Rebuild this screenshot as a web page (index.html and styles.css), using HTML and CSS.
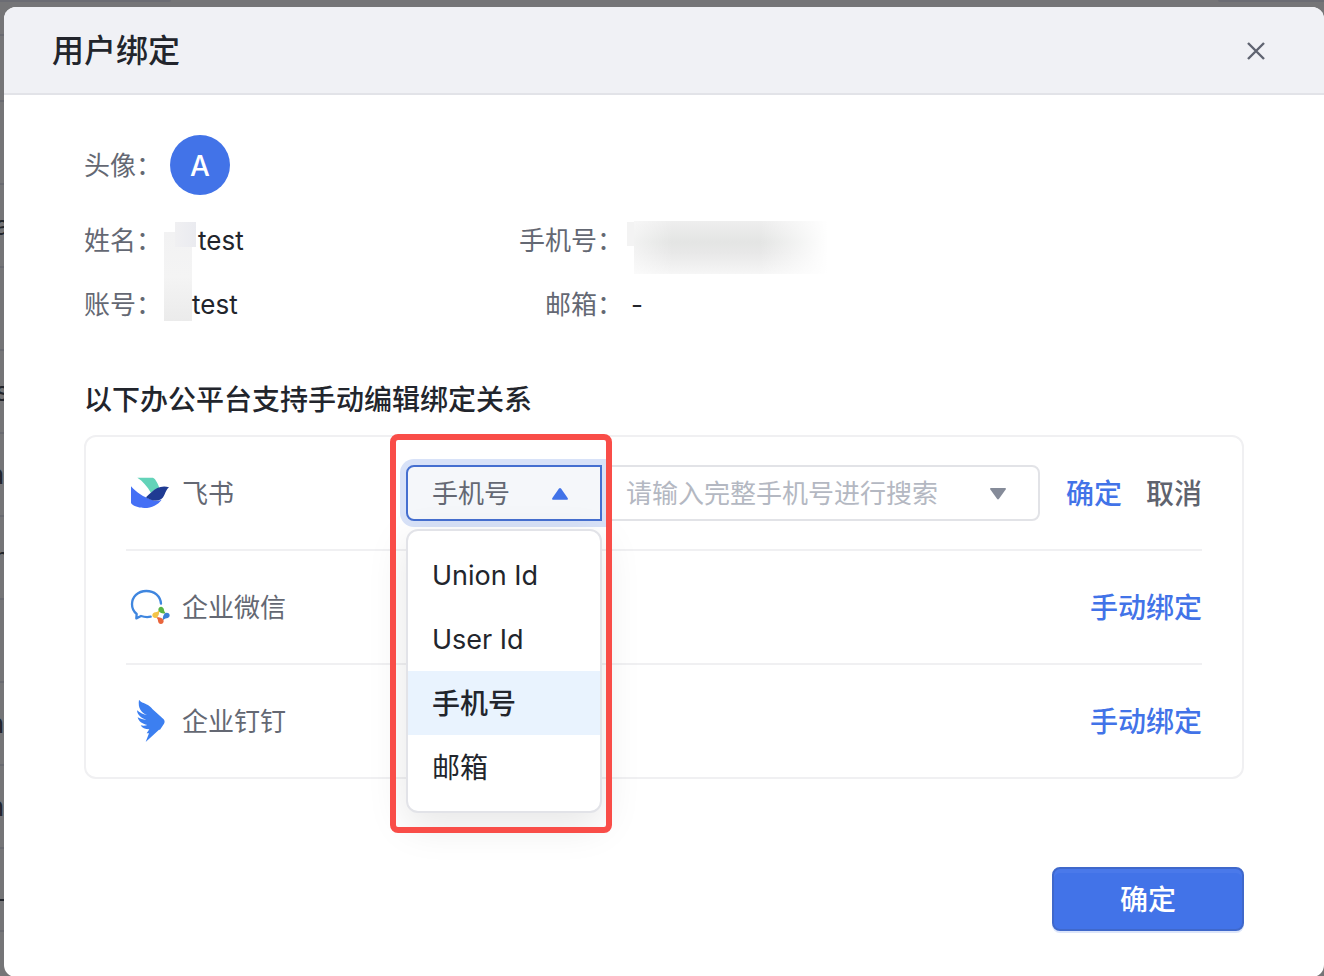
FILE: index.html
```html
<!DOCTYPE html>
<html lang="zh-CN">
<head>
    <meta charset="UTF-8">
    <meta name="viewport" content="width=device-width, initial-scale=1.0">
    <title>用户绑定</title>
    <link rel="stylesheet" href="styles.css">
</head>
<body>
    <div class="tabs">
        <span class="tab tab-left"></span>
        <span class="tab tab-right"></span>
    </div>
    <div class="layout">
        <div class="page-rows" aria-hidden="true">
            <div class="page-row first"></div>
            <div class="page-row head"></div>
            <div class="page-row"></div>
            <div class="page-row">a</div>
            <div class="page-row"></div>
            <div class="page-row">s</div>
            <div class="page-row end">a</div>
            <div class="page-row">n</div>
            <div class="page-row"></div>
            <div class="page-row end">n</div>
            <div class="page-row end">n</div>
            <div class="page-row">_</div>
        </div>

        <div class="modal" role="dialog" aria-labelledby="modalTitle">
            <div class="modal-header">
                <h2 id="modalTitle">用户绑定</h2>
                <button class="close" type="button" aria-label="关闭">
                    <svg width="18" height="18" viewBox="0 0 18 18"><path d="M1 1l16 16M17 1L1 17" stroke="#5f6470" stroke-width="2.4" fill="none"/></svg>
                </button>
            </div>

            <div class="modal-body">
                <div class="field avatar-field">
                    <span class="label">头像：</span>
                    <span class="avatar">A</span>
                </div>
                <div class="info">
                    <div class="field">
                        <span class="label">姓名：</span>
                        <span class="value masked-name">test<span class="mask mask-tall"></span><span class="mask mask-top"></span></span>
                    </div>
                    <div class="field right">
                        <span class="label">手机号：</span>
                        <span class="value"><span class="mask mask-edge"></span><span class="mask mask-phone"></span></span>
                    </div>
                    <div class="field">
                        <span class="label">账号：</span>
                        <span class="value masked-account">test</span>
                    </div>
                    <div class="field right">
                        <span class="label">邮箱：</span>
                        <span class="value">-</span>
                    </div>
                </div>

                <h3>以下办公平台支持手动编辑绑定关系</h3>
                <div class="platforms">
                    <div class="platform">
                        <div class="platform-name">
                            <svg class="logo" width="40" height="36" viewBox="60 46 120 108">
                                <path d="M82 54h44c4 0 7 2 9 5 5 8 10 16 13 26-10 2-18 7-25 15C112 80 98 64 82 54z" fill="#63d3b9"/>
                                <path d="M63 80c16 18 38 33 62 40 9 3 19 4 30 0-11 15-29 25-52 25-16 0-30-5-37-11-2-2-3-3-3-6z" fill="#4570f5"/>
                                <path d="M108 113c6-6 11-11 17-16 13-13 32-20 52-14-7 6-10 14-14 23-6 14-19 20-38 15-6-2-12-4-17-8z" fill="#1f3b92"/>
                            </svg>
                            <span>飞书</span>
                        </div>
                        <div class="editor">
                            <div class="type-select">
                                <select id="bindType" aria-label="绑定方式">
                                    <option>Union Id</option>
                                    <option>User Id</option>
                                    <option selected>手机号</option>
                                    <option>邮箱</option>
                                </select>
                                <svg class="caret" width="16" height="12" viewBox="0 0 16 12"><path d="M0 10.500L7 .6q1-1.200 2 0l7 9.900q0 1.200-1 1.200H1q-1 0-1-1.200z" fill="#4273e8"/></svg>
                                <ul class="menu">
                                    <li><button type="button" class="latin">Union Id</button></li>
                                    <li><button type="button" class="latin">User Id</button></li>
                                    <li><button type="button" class="selected">手机号</button></li>
                                    <li><button type="button">邮箱</button></li>
                                </ul>
                                <span class="highlight"></span>
                            </div>
                            <div class="search">
                                <input type="text" id="keyword" aria-label="搜索" placeholder="请输入完整手机号进行搜索">
                                <svg class="caret" width="16" height="12" viewBox="0 0 16 12"><path d="M0 1q0-1 1-1h14q1 0 1 1L9 10.800q-1 1.200-2 0z" fill="#858b99"/></svg>
                            </div>
                        </div>
                        <div class="actions">
                            <button type="button" class="link">确定</button>
                            <button type="button" class="link cancel">取消</button>
                        </div>
                    </div>
                    <div class="platform">
                        <div class="platform-name">
                            <svg class="logo" width="40" height="36" viewBox="60 42 120 108">
                                <path d="M153 86C151 63 133 48 109 48 83 48 66 66 66 88c0 12 5 22 14 29l-1 13 14-7c9 3 20 4 29 2" fill="none" stroke="#3f86df" stroke-width="7" stroke-linejoin="round" stroke-linecap="round"/>
                                <path d="M145 104c0-6 4-9 8-9 5 0 8 4 9 9 0 5 3 8 6 11-9 2-23-2-23-11z" fill="#5bb544"/>
                                <path d="M145 104c0-6 4-9 8-9 5 0 8 4 9 9 0 5 3 8 6 11-9 2-23-2-23-11z" fill="#3a80d8" transform="rotate(90 153 121)"/>
                                <path d="M145 104c0-6 4-9 8-9 5 0 8 4 9 9 0 5 3 8 6 11-9 2-23-2-23-11z" fill="#e9653c" transform="rotate(180 153 121)"/>
                                <path d="M145 104c0-6 4-9 8-9 5 0 8 4 9 9 0 5 3 8 6 11-9 2-23-2-23-11z" fill="#f3c348" transform="rotate(270 153 121)"/>
                            </svg>
                            <span>企业微信</span>
                        </div>
                        <div class="actions">
                            <button type="button" class="link">手动绑定</button>
                        </div>
                    </div>
                    <div class="platform">
                        <div class="platform-name">
                            <svg class="logo" width="40" height="44" viewBox="60 28 120 132">
                                <path d="M87 30c3 5 8 7 14 10 14 6 20 10 26 18l34 31c3 4 4 8 1 13l-12 18h-3l-40 37 10-26h-7l8-12c-13 0-22-4-26-12 8 2 15 1 20-1-16-3-26-11-29-23 8 5 17 7 26 8-16-6-27-15-28-29 9 8 20 12 31 15-18-9-29-21-25-47z" fill="#3c7ff0"/>
                            </svg>
                            <span>企业钉钉</span>
                        </div>
                        <div class="actions">
                            <button type="button" class="link">手动绑定</button>
                        </div>
                    </div>
                </div>

                <div class="modal-footer">
                    <button type="button" class="primary">确定</button>
                </div>
            </div>
        </div>
    </div>
</body>
</html>
```
FILE: styles.css
```css
* {
    box-sizing: border-box;
}
body {
    margin: 0;
    height: 100vh;
    overflow: hidden;
    background: #757577;
    color: #22252c;
    font-family: Inter, "Noto Sans CJK SC", sans-serif;
    font-size: 26px;
    line-height: 32px;
}
h2, h3, ul {
    margin: 0;
    padding: 0;
}
button, input, select {
    font: inherit;
    color: inherit;
    margin: 0;
}
button {
    padding: 0;
    border: 0;
    background: none;
    cursor: pointer;
}

/* page behind the dialog */
.tabs {
    display: flex;
    justify-content: space-between;
    height: 7px;
}
.tab {
    height: 2px;
    background: #6b6c73;
}
.tab-left {
    width: 171px;
    border-bottom-right-radius: 2px;
}
.tab-right {
    width: 106px;
    border-bottom-left-radius: 2px;
}
.layout {
    display: flex;
    align-items: flex-start;
}
.page-rows {
    flex: 0 0 4px;
    width: 4px;
    overflow: hidden;
}
.page-row {
    display: flex;
    justify-content: center;
    align-items: center;
    height: 83px;
    border-bottom: 2px solid #696a70;
}
.page-row.end {
    justify-content: flex-end;
}
.page-row.first {
    height: 29px;
}
.page-row.head {
    height: 66px;
}

.modal {
    flex: 1;
    min-width: 0;
    background: #fff;
    border-radius: 12px;
}
.modal-header {
    display: flex;
    justify-content: space-between;
    align-items: center;
    height: 88px;
    padding: 2px 56px 0 48px;
    background: #f0f1f5;
    border-bottom: 2px solid #e2e3e8;
    border-radius: 12px 12px 0 0;
}
.modal-header h2 {
    font-size: 32px;
    font-weight: 500;
    line-height: 40px;
}
.close {
    display: flex;
    padding: 3px;
}
.modal-body {
    padding: 40px 80px 46px;
}

.field {
    display: flex;
    align-items: center;
    gap: 8px;
}
.label {
    color: #646873;
    white-space: nowrap;
}
.avatar-field .label {
    padding-top: 2px;
}
.field.right .label {
    min-width: 104px;
    text-align: right;
}
.value {
    position: relative;
    min-height: 32px;
}
.avatar {
    width: 60px;
    height: 60px;
    border-radius: 50%;
    background: #4273e8;
    color: #fff;
    font-size: 28px;
    font-weight: 500;
    line-height: 62px;
    text-align: center;
}
.info {
    display: grid;
    grid-template-columns: 37.5% 1fr;
    row-gap: 32px;
    margin-top: 30px;
}
.masked-name {
    padding-left: 28px;
}
.masked-account {
    padding-left: 22px;
}
.mask {
    position: absolute;
}
.mask-tall {
    top: 7px;
    left: -6px;
    width: 28px;
    height: 89px;
    background: linear-gradient(#f2f2f3, #f4f4f4 50%, #ebebeb);
}
.mask-top {
    top: -3px;
    left: 5px;
    width: 21px;
    height: 25px;
    background: linear-gradient(to right, #f0f0f2, #eaebf0);
}
.mask-edge {
    top: -3px;
    left: -4px;
    width: 7px;
    height: 24px;
    background: #f3f3f3;
}
.mask-phone {
    top: -4px;
    left: 3px;
    width: 194px;
    height: 53px;
    background:
        linear-gradient(to right, rgba(255, 255, 255, 0.5), rgba(255, 255, 255, 0) 20%, rgba(255, 255, 255, 0) 65%, #fff),
        linear-gradient(#eeeeee, #e4e5e4 40%, #e8e8e8 60%, #f6f6f6);
}

h3 {
    margin-top: 59px;
    margin-bottom: 15px;
    font-size: 28px;
    font-weight: 500;
    line-height: 40px;
}
.platforms {
    padding: 0 40px;
    border: 2px solid #f0f0f2;
    border-radius: 12px;
}
.platform {
    display: flex;
    align-items: center;
    height: 114px;
    border-bottom: 2px solid #f0f0f2;
}
.platform:last-child {
    height: 112px;
    border-bottom: 0;
}
.platform-name {
    display: flex;
    flex: 0 0 280px;
    align-items: center;
    gap: 12px;
    padding-left: 4px;
    color: #646873;
}
.platform-name span {
    padding-top: 2px;
}
.editor {
    display: flex;
    flex: 1;
    min-width: 0;
    height: 56px;
}
.type-select {
    position: relative;
    z-index: 1;
    flex: 0 0 196px;
}
.type-select select {
    width: 100%;
    height: 56px;
    padding: 2px 24px 0;
    appearance: none;
    background: #f5f7fa;
    border: 2px solid #456fd0;
    border-radius: 8px 0 0 8px;
    box-shadow: 0 0 0 6px #d8e2f8;
    color: #646873;
    outline: none;
}
.caret {
    position: absolute;
    top: 23px;
    right: 34px;
    pointer-events: none;
}
.search {
    position: relative;
    flex: 1;
    margin-left: -2px;
}
.search input {
    width: 100%;
    height: 56px;
    padding: 0 60px 0 24px;
    background: #fff;
    border: 2px solid #e2e3e7;
    border-radius: 0 8px 8px 0;
    outline: none;
}
.search input::placeholder {
    color: #b4b8c2;
    opacity: 1;
}
.menu {
    position: absolute;
    top: 64px;
    left: 0;
    width: 100%;
    padding: 12px 0;
    list-style: none;
    background: #fff;
    border: 2px solid #e2e3e8;
    border-radius: 12px;
    box-shadow: 0 12px 40px rgba(0, 0, 0, 0.1);
}
.menu button {
    display: block;
    width: 100%;
    height: 64px;
    padding: 2px 24px 0;
    font-size: 28px;
    text-align: left;
}
.menu .latin {
    font-size: 27px;
}
.menu .selected {
    background: #e9f3fe;
    font-weight: 500;
}
.highlight {
    position: absolute;
    top: -31px;
    left: -16px;
    width: 222px;
    height: 399px;
    border: 6px solid #f94d48;
    border-radius: 8px;
    pointer-events: none;
}

.actions {
    display: flex;
    gap: 24px;
    margin-left: auto;
    padding-left: 26px;
}
.link {
    padding-top: 2px;
    color: #4273e8;
    font-size: 28px;
    font-weight: 500;
    white-space: nowrap;
}
.link.cancel {
    color: #5f636e;
}

.modal-footer {
    display: flex;
    justify-content: flex-end;
    margin-top: 88px;
}
.primary {
    width: 192px;
    height: 64px;
    padding-top: 2px;
    background: #4273e8;
    border: 2px solid #3f68cb;
    border-radius: 8px;
    box-shadow: 0 2px 0 #dce5fa, inset 0 4px 0 #4a79ea;
    color: #fff;
    font-size: 28px;
    font-weight: 500;
}
```
